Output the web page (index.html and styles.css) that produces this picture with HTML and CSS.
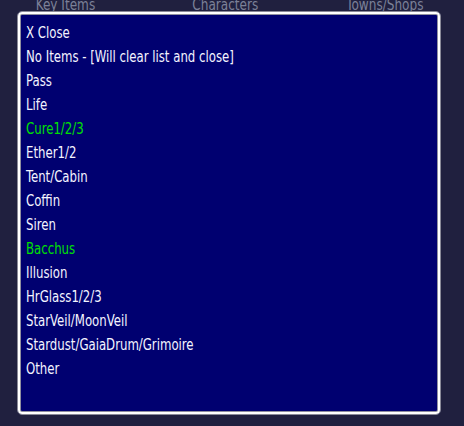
FILE: index.html
```html
<!DOCTYPE html>
<html>
<head>
<meta charset="utf-8">
<link rel="stylesheet" href="styles.css">
</head>
<body>
<div class="tabs">
  <div class="tab"><span>Key Items</span></div>
  <div class="tab"><span>Characters</span></div>
  <div class="tab"><span>Towns/Shops</span></div>
</div>
<div class="modal">
  <ul class="list">
    <li>X Close</li>
    <li>No Items - [Will clear list and close]</li>
    <li>Pass</li>
    <li>Life</li>
    <li class="on">Cure1/2/3</li>
    <li>Ether1/2</li>
    <li>Tent/Cabin</li>
    <li>Coffin</li>
    <li>Siren</li>
    <li class="on">Bacchus</li>
    <li>Illusion</li>
    <li>HrGlass1/2/3</li>
    <li>StarVeil/MoonVeil</li>
    <li>Stardust/GaiaDrum/Grimoire</li>
    <li>Other</li>
  </ul>
</div>
</body>
</html>
```
FILE: styles.css
```css
html, body {
  margin: 0;
  padding: 0;
}
body {
  background: #20203f;
  width: 464px;
  height: 426px;
  position: relative;
  overflow: hidden;
  font-family: "DejaVu Sans Condensed", "DejaVu Sans", sans-serif;
  font-size: 16px;
}
.tabs {
  display: grid;
  grid-template-columns: repeat(3, 1fr);
  margin-top: -5px;
  color: #7c8098;
  text-align: center;
  line-height: 20px;
}
.tab span {
  display: inline-block;
  transform: scaleX(0.84);
}
.tab:nth-child(1) { padding-right: 24px; }
.tab:nth-child(2) { padding-right: 14px; }
.tab:nth-child(3) { padding-right: 4px; }
.modal {
  position: absolute;
  left: 17px;
  top: 11px;
  width: 424px;
  height: 404px;
  box-sizing: border-box;
  border-radius: 5px;
  background: #000070;
  border: 1px solid #8a8a98;
  box-shadow: inset 0 0 0 2px #ffffff, inset 0 0 0 3px #9090a0;
  padding: 9px 8px;
}
.list {
  list-style: none;
  margin: 0;
  padding: 0;
  color: #f4f4ff;
  line-height: 24px;
  transform: scaleX(0.815);
  transform-origin: 0 0;
  white-space: nowrap;
}
.list .on {
  color: #00e000;
}
```
